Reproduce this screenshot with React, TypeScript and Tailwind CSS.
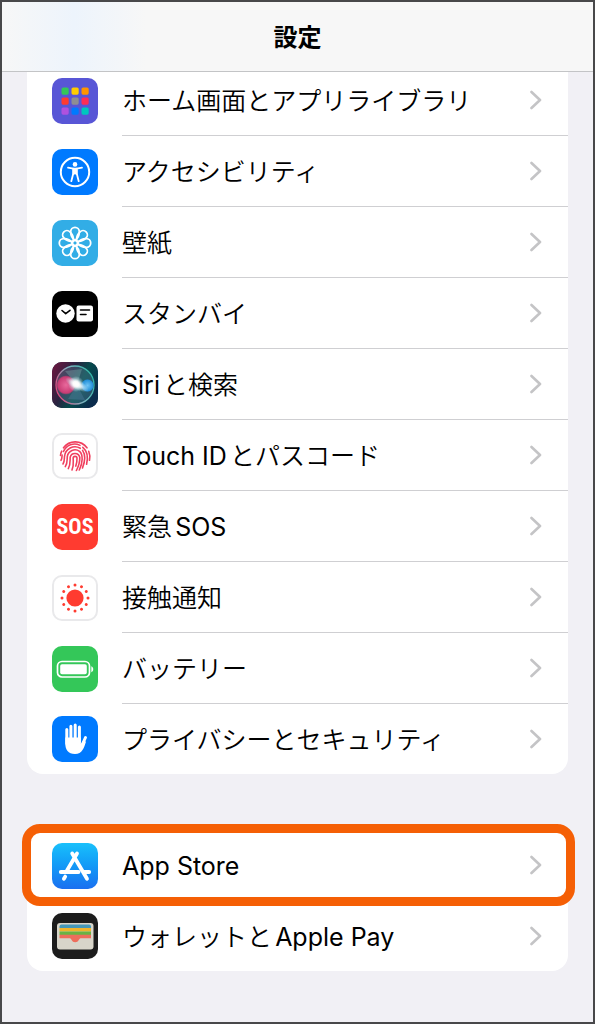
import { FC, ReactNode } from "react";

const Chevron: FC = () => (
  <svg viewBox="0 0 12 20" className="mr-[26px] h-5 w-3 shrink-0" fill="none" stroke="#c4c4c6" strokeWidth="2.6" strokeLinecap="round" strokeLinejoin="round">
    <path d="M1.500 2l8.500 8-8.500 8" />
  </svg>
);

interface TileProps {
  className: string;
  children: ReactNode;
}

const Tile: FC<TileProps> = ({ className, children }) => (
  <span
    className={`flex h-[46px] w-[46px] shrink-0 items-center justify-center overflow-hidden rounded-[10px] ${className}`}
  >
    {children}
  </span>
);

const HomeScreenIcon: FC = () => {
  const colors = ["#34c759", "#ffcc00", "#ff9500", "#ff3b30", "#8e8e93", "#ff2d55", "#af52de", "#007aff", "#00c7be"];
  return (
    <Tile className="bg-[#5856d6]">
      <svg viewBox="0 0 46 46" className="h-full w-full">
        {colors.map((color, i) => (
          <rect key={color} x={9.5 + (i % 3) * 10} y={9.5 + Math.floor(i / 3) * 10} width="7.2" height="7.2" rx="1.6" fill={color} />
        ))}
      </svg>
    </Tile>
  );
};

const AccessibilityIcon: FC = () => (
  <Tile className="bg-[#007aff]">
    <svg viewBox="0 0 46 46" className="h-full w-full">
      <circle cx="23" cy="23" r="14.2" fill="none" stroke="#fff" strokeWidth="2" />
      <circle cx="23" cy="15.4" r="2.3" fill="#fff" />
      <path d="M16 18.6l5.2 1v5.2L19.3 32.2M30 18.6l-5.2 1v5.2l1.9 7.4" fill="none" stroke="#fff" strokeWidth="1.8" strokeLinecap="round" strokeLinejoin="round" />
      <path d="M20.6 18.8h4.8v6.4l-1.3.8L23 25l-1.1 1-1.3-.8z" fill="#fff" />
    </svg>
  </Tile>
);

const WallpaperIcon: FC = () => (
  <Tile className="bg-[#32ade6]">
    <svg viewBox="0 0 46 46" className="h-full w-full" fill="none" stroke="#fff" strokeWidth="1.8">
      {[0, 45, 90, 135, 180, 225, 270, 315].map((angle) => (
        <path key={angle} d="M23 20.4C20 18.600 18.700 14.500 18.700 11.600a4.300 4.300 0 0 1 8.600 0C27.300 14.500 26 18.600 23 20.400z" transform={`rotate(${angle} 23 23)`} />
      ))}
      <circle cx="23" cy="23" r="2.6" />
    </svg>
  </Tile>
);

const StandByIcon: FC = () => (
  <Tile className="bg-black">
    <svg viewBox="0 0 46 46" className="h-full w-full">
      <circle cx="13.5" cy="22.5" r="9.2" fill="#fff" />
      <path d="M10 19.500l3.700 3.200 4.300-3.400" fill="none" stroke="#000" strokeWidth="1.6" strokeLinecap="round" strokeLinejoin="round" />
      <rect x="24.5" y="14.5" width="16.5" height="16" rx="2.2" fill="#fff" />
      <path d="M28.500 19h9M28.500 23.500h5.500" stroke="#000" strokeWidth="1.6" strokeLinecap="round" />
    </svg>
  </Tile>
);

const SiriIcon: FC = () => (
  <Tile className="bg-[#12243f]">
    <svg viewBox="0 0 46 46" className="h-full w-full">
      <defs>
        <linearGradient id="siri-bg" x1="0" y1="0.1" x2="1" y2="0.6">
          <stop offset="0" stopColor="#6b1740" />
          <stop offset="0.4" stopColor="#2a2340" />
          <stop offset="0.65" stopColor="#064b4c" />
          <stop offset="1" stopColor="#0b2c4d" />
        </linearGradient>
        <linearGradient id="siri-ring" x1="0" y1="0.7" x2="1" y2="0.3">
          <stop offset="0" stopColor="#e0447c" />
          <stop offset="0.5" stopColor="#7fb3c0" />
          <stop offset="1" stopColor="#2fb6a5" />
        </linearGradient>
        <radialGradient id="siri-pink">
          <stop offset="0" stopColor="#e8699c" />
          <stop offset="0.85" stopColor="#c83c74" />
          <stop offset="1" stopColor="#c93a70" stopOpacity="0.3" />
        </radialGradient>
        <radialGradient id="siri-blue">
          <stop offset="0" stopColor="#6fc4f5" />
          <stop offset="0.85" stopColor="#2490d8" />
          <stop offset="1" stopColor="#1d7cc8" stopOpacity="0.2" />
        </radialGradient>
        <radialGradient id="siri-glow">
          <stop offset="0" stopColor="#fff" />
          <stop offset="0.35" stopColor="#fff" stopOpacity="0.85" />
          <stop offset="1" stopColor="#bfe9f5" stopOpacity="0" />
        </radialGradient>
      </defs>
      <rect width="46" height="46" fill="url(#siri-bg)" />
      <circle cx="23" cy="23" r="19" fill="#5b8da0" fillOpacity="0.35" stroke="url(#siri-ring)" strokeWidth="1.3" />
      <circle cx="14" cy="23" r="9.500" fill="url(#siri-pink)" />
      <circle cx="35.5" cy="23.5" r="6.500" fill="url(#siri-blue)" />
      <path d="M25 23l-9 14 17 1z" fill="#6b8fc0" fillOpacity="0.25" />
      <path d="M25 23L13 9l17-2z" fill="#a7e0d2" fillOpacity="0.25" />
      <ellipse cx="25" cy="22.5" rx="13" ry="5" transform="rotate(28 25 22.5)" fill="url(#siri-glow)" />
      <circle cx="24" cy="22" r="8" fill="url(#siri-glow)" />
    </svg>
  </Tile>
);

const TouchIdIcon: FC = () => (
  <Tile className="border-2 border-[#e9e9eb] bg-white">
    <svg viewBox="2 2 42 42" className="h-full w-full" fill="none" stroke="#f0405f" strokeWidth="1.6" strokeLinecap="round">
      <path d="M11.500 14.800a14.600 14.600 0 0 1 23.500 0" />
      <path d="M8.500 22.500c.1-1.500.5-3 1.200-4.400M36.700 18.300c1 2.400 1.400 6 .8 9" />
      <path d="M9 27.300c1.300-2 .8-3.200 1.100-5.200" />
      <path d="M11.500 18.500a12 12 0 0 1 16.500-6.100M30.800 14.300c4.300 3.500 5.500 9.500 3.800 17" />
      <path d="M11 31c1.700-2.500 1.200-4.800 1.500-7.500a10.500 10.500 0 0 1 15.800-8.200M30.600 17.400c2.600 3.800 2.600 10.600-.1 17.600" />
      <path d="M13.300 33.600c2.400-3.600 1.700-6.800 2-10a7.700 7.700 0 0 1 12.300-5.200c3.700 3.300 3.200 11.300-.3 18.600" />
      <path d="M16.300 35.600c2.500-4.500 1.600-7.600 1.900-11.300a4.900 4.900 0 0 1 9.600.2c.1 4.600-1.100 8.500-3.400 13" />
      <path d="M20 36.900c2-4.500 1.200-7.700 1.200-11.600a1.900 1.900 0 0 1 3.800-.1c.1 3-.3 5.400-1.200 7.900" />
    </svg>
  </Tile>
);

const SosIcon: FC = () => (
  <Tile className="bg-[#ff3b30]">
    <span className="font-['Liberation_Sans_Narrow','Roboto_Condensed','Roboto'] text-[22px] leading-none font-bold text-white">
      SOS
    </span>
  </Tile>
);

const ExposureIcon: FC = () => (
  <Tile className="border-2 border-[#e9e9eb] bg-white">
    <svg viewBox="2 2 42 42" className="h-full w-full" fill="#ff3b30">
      <circle cx="23" cy="23" r="8.600" />
      {[0, 30, 60, 90, 120, 150, 180, 210, 240, 270, 300, 330].map((angle) => (
        <circle key={angle} cx="23" cy="10" r="1.500" transform={`rotate(${angle} 23 23)`} />
      ))}
    </svg>
  </Tile>
);

const BatteryIcon: FC = () => (
  <Tile className="bg-[#34c759]">
    <svg viewBox="0 0 46 46" className="h-full w-full">
      <rect x="5.500" y="15.500" width="32" height="15.500" rx="4.500" fill="none" stroke="#fff" strokeWidth="1.700" />
      <rect x="8.200" y="18.200" width="26.600" height="10.100" rx="1.800" fill="#fff" />
      <path d="M39.300 20.300c2.600.9 2.600 5 0 5.900z" fill="#fff" />
    </svg>
  </Tile>
);

const PrivacyIcon: FC = () => (
  <Tile className="bg-[#007aff]">
    <svg viewBox="0 0 46 46" className="h-full w-full">
      <g fill="none" stroke="#fff" strokeWidth="3" strokeLinecap="round">
        <path d="M14.800 13.500v14M18.900 10.200v14M23.200 9v15M27.400 11v15M33.500 21.500l-3.800 8.500" />
      </g>
      <path d="M13.300 21.500h15.600v6.500l3-4.500 2 2.500c-1.800 5.500-3.600 12-10.900 12-6.900 0-9.700-4.500-9.700-10.500z" fill="#fff" />
    </svg>
  </Tile>
);

const AppStoreIcon: FC = () => (
  <Tile className="bg-linear-to-b from-[#1bc0fb] to-[#1b6ff0]">
    <svg viewBox="0 0 46 46" className="h-full w-full" fill="none" stroke="#fff" strokeWidth="3.800" strokeLinecap="round">
      <path d="M25 10.500L15 27.500M20.200 10.500l14.800 25.300M8.800 29h17.700M32 29h5.200M13.200 33.600l-1.300 2.200" />
    </svg>
  </Tile>
);

const WalletIcon: FC = () => (
  <Tile className="bg-[#1c1c1c]">
    <svg viewBox="0 0 46 46" className="h-full w-full">
      <rect x="5" y="10" width="36.500" height="26.500" rx="3" fill="#d8d5ca" />
      <path d="M7.500 15v-1.500a2 2 0 0 1 2-2h27.500a2 2 0 0 1 2 2V15z" fill="#4598b8" />
      <path d="M7.500 15H39v3.500H7.500z" fill="#f0b42c" />
      <path d="M7.500 18.500H39V22H7.500z" fill="#69b345" />
      <path d="M7.500 21.700H39v3.500H28.500c-1.500 0-1.700 4-5.300 4s-3.700-4-5.200-4H7.500z" fill="#ee6d5c" />
    </svg>
  </Tile>
);

interface RowProps {
  icon: ReactNode;
  label: string;
  last?: boolean;
}

const Row: FC<RowProps> = ({ icon, label, last }) => (
  <li>
    <a href="#" className={`flex items-center pl-[25px] ${last ? "h-[70px]" : "h-[71px]"}`}>
      {icon}
      <span
        className={`ml-6 flex h-full flex-1 items-center justify-between ${last ? "" : "border-b border-[#cfcfd2]"}`}
      >
        <span className="pt-1 font-['Inter','Noto_Sans_CJK_JP_DemiLight','Noto_Sans_CJK_JP',sans-serif] whitespace-nowrap [text-autospace:normal]">
          {label}
        </span>
        <Chevron />
      </span>
    </a>
  </li>
);

const App: FC = () => {
  return (
    <div className="min-h-screen overflow-hidden border-2 border-[#48484a] bg-[#f1f0f5] font-['Inter','Noto_Sans_CJK_JP',sans-serif] text-[25px] text-black">
      <header className="relative flex h-[70px] items-center justify-center border-b border-[#c3c4c6] bg-[#f7f7f7]">
        <div className="absolute inset-y-0 left-0 w-36 bg-linear-to-r from-transparent via-[#edf4fc] to-transparent" />
        <h1 className="pt-0.5 text-2xl font-bold">設定</h1>
      </header>
      <main className="px-[25px] pb-12">
        <div className="overflow-hidden rounded-b-2xl bg-white">
          <ul className="-mt-[7px]">
            <Row icon={<HomeScreenIcon />} label="ホーム画面とアプリライブラリ" />
            <Row icon={<AccessibilityIcon />} label="アクセシビリティ" />
            <Row icon={<WallpaperIcon />} label="壁紙" />
            <Row icon={<StandByIcon />} label="スタンバイ" />
            <Row icon={<SiriIcon />} label="Siriと検索" />
            <Row icon={<TouchIdIcon />} label="Touch IDとパスコード" />
            <Row icon={<SosIcon />} label="緊急SOS" />
            <Row icon={<ExposureIcon />} label="接触通知" />
            <Row icon={<BatteryIcon />} label="バッテリー" />
            <Row icon={<PrivacyIcon />} label="プライバシーとセキュリティ" last />
          </ul>
        </div>
        <div className="relative mt-14">
          <ul className="rounded-2xl bg-white">
            <Row icon={<AppStoreIcon />} label="App Store" />
            <Row icon={<WalletIcon />} label="ウォレットとApple Pay" last />
          </ul>
          <div className="pointer-events-none absolute -top-[6px] -right-[7px] -left-[5px] h-[82px] rounded-[18px] border-9 border-[#f55f05]" />
        </div>
      </main>
    </div>
  );
};

export default App;
